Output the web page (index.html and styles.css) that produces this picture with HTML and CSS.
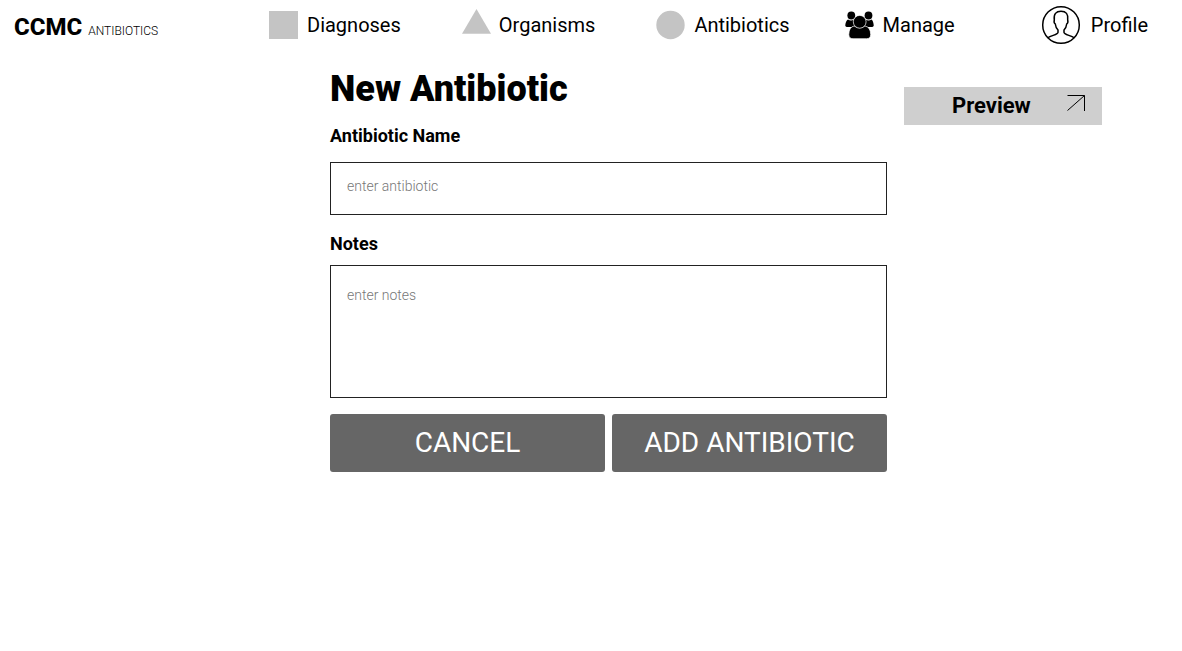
FILE: index.html
```html
<!DOCTYPE html>
<html lang="en">
<head>
<meta charset="utf-8">
<meta name="viewport" content="width=device-width, initial-scale=1">
<title>New Antibiotic</title>
<link rel="stylesheet" href="styles.css">
</head>
<body>
<header class="header">
  <a class="brand" href="#"><strong class="brand-name">CCMC</strong><span class="brand-sub">ANTIBIOTICS</span></a>
  <nav class="nav">
    <div class="nav-group">
      <a class="nav-link" href="#">
        <svg class="icon" viewBox="0 0 29 29" aria-hidden="true"><rect y="0" width="29" height="28" fill="#c4c4c4"/></svg>
        Diagnoses
      </a>
      <a class="nav-link nav-organisms" href="#">
        <svg class="icon" viewBox="0 0 29 29" aria-hidden="true"><path d="M14.500-2 29 22.800H0z" fill="#c4c4c4"/></svg>
        Organisms
      </a>
      <a class="nav-link" href="#">
        <svg class="icon" viewBox="0 0 29 29" aria-hidden="true"><circle cx="14.500" cy="14" r="14.200" fill="#c4c4c4"/></svg>
        Antibiotics
      </a>
    </div>
    <a class="nav-link" href="#">
      <svg class="icon" viewBox="0 0 29 29" aria-hidden="true">
        <circle cx="6.300" cy="4.500" r="3.900"/><circle cx="23.500" cy="4.500" r="3.900"/>
        <path d="M3 8.500Q6 10.500 9 8.500L12 16H3Q0 16 .3 14Q.8 9.500 3 8.500zM26.500 8.500Q23.500 10.500 20.500 8.500L17 16H26Q29 16 28.700 14Q28.200 9.500 26.500 8.500z"/>
        <path d="M9 15Q14.500 18.500 20 15Q25.500 16 25.700 23.500Q25.700 27.700 21.500 27.700H8Q3.800 27.700 3.800 23.500Q4 16 9 15z" stroke="#fff" stroke-width=".7"/>
        <circle cx="14.700" cy="10.800" r="6.400" stroke="#fff" stroke-width=".7"/>
      </svg>
      Manage
    </a>
    <a class="nav-link nav-profile" href="#">
      <svg class="icon-profile" viewBox="0 0 39 39" fill="none" stroke="#000" stroke-width="1.500" aria-hidden="true">
        <circle cx="19" cy="19" r="18.300"/>
        <path d="M5.700 31.800C9.500 29.400 16 28.500 16 26.500V24C14 22 13.500 20 13.300 18C11.800 17 11.900 15.500 12.300 14C11.500 8 14 5.300 19 5.300S26.500 8 25.700 14C26.100 15.500 26.200 17 24.700 18C24.500 20 24 22 22 24V26.500C22 28.500 28.500 29.400 32.300 31.800"/>
      </svg>
      Profile
    </a>
  </nav>
</header>
<main class="main">
  <form class="form">
    <h1 class="title">New Antibiotic</h1>
    <label class="label" for="name">Antibiotic Name</label>
    <input class="field field-name" id="name" type="text" placeholder="enter antibiotic">
    <label class="label" for="notes">Notes</label>
    <textarea class="field field-notes" id="notes" placeholder="enter notes"></textarea>
    <div class="actions">
      <button class="button" type="button">CANCEL</button>
      <button class="button" type="submit">ADD ANTIBIOTIC</button>
    </div>
  </form>
  <button class="preview" type="button">
    <span class="preview-text">Preview</span>
    <svg class="preview-arrow" viewBox="0 0 18 18" fill="none" stroke="#000" aria-hidden="true"><path d="M.5 1.500H17.500V17M17.500 1.500.5 16.500"/></svg>
  </button>
</main>
</body>
</html>
```
FILE: styles.css
```css
* { box-sizing: border-box; }
body {
  margin: 0;
  background: #fff;
  color: #000;
  font-family: Roboto, "Liberation Sans", sans-serif;
}
.header {
  display: grid;
  grid-template-columns: 255px 1fr;
  align-items: center;
  height: 50px;
  padding: 0 34px 0 14px;
}
.brand {
  display: flex;
  align-items: baseline;
  gap: 6px;
  padding-top: 4px;
  color: inherit;
  text-decoration: none;
  white-space: nowrap;
}
.brand-name { font-size: 24px; font-weight: 800; }
.brand-sub { font-size: 12px; font-weight: 300; }
.nav { display: flex; align-items: center; gap: 55px; }
.nav-group { display: flex; align-items: center; gap: 61px; }
.nav-link {
  display: flex;
  align-items: center;
  gap: 9px;
  color: inherit;
  font-size: 20px;
  line-height: 24px;
  text-decoration: none;
}
.nav-organisms { gap: 8px; }
.nav-profile { gap: 10px; margin-left: auto; }
.icon { width: 29px; height: 29px; overflow: visible; }
.icon-profile { width: 39px; height: 39px; overflow: visible; }
.main {
  display: grid;
  grid-template-columns: minmax(0, 1fr) 198px;
  align-items: start;
  gap: 17px;
  padding: 17px 80px 40px 330px;
}
.form { display: flex; flex-direction: column; }
.title { margin: 0; font-size: 36px; font-weight: 900; line-height: 44px; }
.label { margin-top: 13px; font-size: 18px; font-weight: 700; line-height: 24px; }
.field {
  width: 100%;
  border: 1px solid #222;
  border-radius: 0;
  background: #fff;
  color: #000;
  font-family: inherit;
  font-size: 14px;
  font-weight: 300;
  line-height: 20px;
}
.field::placeholder { color: #777; opacity: 1; }
.field-name { height: 53px; margin: 14px 0 4px; padding: 0 16px 6px; }
.field-notes { height: 133px; margin-top: 9px; padding: 19px 16px; resize: none; }
.actions { display: grid; grid-template-columns: 1fr 1fr; gap: 7px; margin-top: 16px; }
.button {
  height: 58px;
  padding: 0 0 2px;
  border: 0;
  border-radius: 3px;
  background: #666;
  color: #fff;
  font-family: inherit;
  font-size: 28px;
  font-weight: 400;
}
.preview {
  display: flex;
  align-items: center;
  justify-content: space-between;
  height: 38px;
  margin-top: 20px;
  padding: 0 17px 2px 48px;
  border: 0;
  background: #cfcfcf;
  color: #000;
  font-family: inherit;
}
.preview-text { font-size: 22px; font-weight: 700; }
.preview-arrow { width: 18px; height: 18px; margin-bottom: 4px; }
```
